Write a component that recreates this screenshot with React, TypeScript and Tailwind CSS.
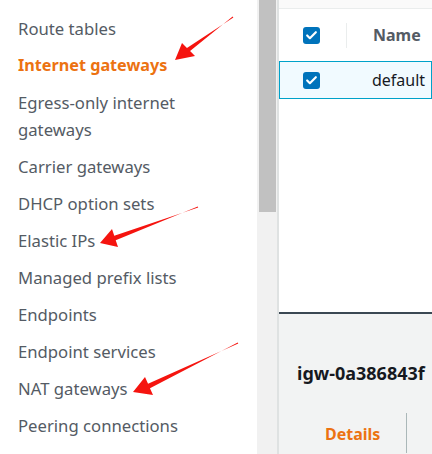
import { Check } from "lucide-react";

const NAV_ITEMS: Array<{ label: string; active?: boolean }> = [
  { label: "Route tables" },
  { label: "Internet gateways", active: true },
  { label: "Egress-only internet gateways" },
  { label: "Carrier gateways" },
  { label: "DHCP option sets" },
  { label: "Elastic IPs" },
  { label: "Managed prefix lists" },
  { label: "Endpoints" },
  { label: "Endpoint services" },
  { label: "NAT gateways" },
  { label: "Peering connections" },
];

function Checkbox() {
  return (
    <span className="flex h-[17px] w-[17px] items-center justify-center rounded-[3px] bg-[#0073bb]">
      <Check className="h-[13px] w-[13px] text-white" strokeWidth={4} />
    </span>
  );
}

// red annotation arrows drawn over the screenshot
function Arrow({ tail, tip, w1, w2 }: { tail: [number, number]; tip: [number, number]; w1: [number, number]; w2: [number, number] }) {
  const nx = tip[1] - tail[1];
  const ny = -(tip[0] - tail[0]);
  const len = Math.hypot(nx, ny);
  const ux = nx / len;
  const uy = ny / len;
  const neckA: [number, number] = [w1[0] + (w2[0] - w1[0]) * 0.38, w1[1] + (w2[1] - w1[1]) * 0.38];
  const neckB: [number, number] = [w1[0] + (w2[0] - w1[0]) * 0.62, w1[1] + (w2[1] - w1[1]) * 0.62];
  const pts = [
    [tail[0] + ux * 0.6, tail[1] + uy * 0.6],
    neckA,
    w1,
    tip,
    w2,
    neckB,
    [tail[0] - ux * 0.6, tail[1] - uy * 0.6],
  ];
  return <polygon points={pts.map((p) => p.join(",")).join(" ")} fill="#f5140f" />;
}

export default function App() {
  return (
    <div className="relative flex h-[454px] w-[432px] overflow-hidden bg-white font-['Noto_Sans',sans-serif]">
      <nav className="w-[257px] shrink-0 bg-white pl-[18px] pt-[15px]">
        <ul className="flex flex-col gap-[10px]">
          {NAV_ITEMS.map((item) => (
            <li
              key={item.label}
              className={
                item.active
                  ? "text-[16.2px] font-bold leading-[27px] text-[#ec7211]"
                  : "w-[200px] text-[16.7px] leading-[27px] text-[#545b64]"
              }
            >
              {item.label}
            </li>
          ))}
        </ul>
      </nav>

      <div className="w-[20px] shrink-0 bg-[#f1f1f1] pl-[2px]">
        <div className="h-[212px] w-[17px] bg-[#c1c1c1]" />
      </div>

      <div className="flex min-w-0 flex-1 flex-col overflow-hidden border-l-2 border-[#dfe2e2] bg-[#f2f3f3]">
        <div className="flex h-[314px] flex-col border-b-2 border-[#3b4853] bg-white">
          <div className="h-[9px] border-b border-[#eaeded] bg-[#fafafa]" />
          <div className="flex h-[52px] items-center">
            <div className="flex w-[68px] items-center pl-[24px]">
              <Checkbox />
              <span className="ml-[26px] h-[25px] w-px bg-[#eaeded]" />
            </div>
            <span className="pl-[26px] text-[16px] font-bold text-[#545b64]">Name</span>
          </div>
          <div className="flex h-[38px] items-center border border-[#00a1c9] bg-[#f1faff]">
            <div className="w-[68px] pl-[23px]">
              <Checkbox />
            </div>
            <span className="pl-[24px] text-[16px] text-[#16191f]">default</span>
          </div>
        </div>
        <div className="pl-[18px] pt-[46px] text-[18px] font-bold whitespace-nowrap text-[#16191f]">
          igw-0a386843f
        </div>
        <div className="mt-[22px] flex h-[44px] items-start">
          <span className="pl-[46px] pt-[13px] text-[16px] font-bold text-[#ec7211]">Details</span>
          <span className="ml-[26px] mt-[4px] h-[40px] w-px bg-[#aab7b8]" />
        </div>
      </div>

      <svg className="pointer-events-none absolute inset-0" width="432" height="454">
        <Arrow tail={[233, 17]} tip={[175, 60]} w1={[182, 43]} w2={[195, 56]} />
        <Arrow tail={[198, 207]} tip={[100, 243]} w1={[112, 229]} w2={[118, 247]} />
        <Arrow tail={[238, 343]} tip={[133, 392]} w1={[145, 377]} w2={[153, 395]} />
      </svg>
    </div>
  );
}
